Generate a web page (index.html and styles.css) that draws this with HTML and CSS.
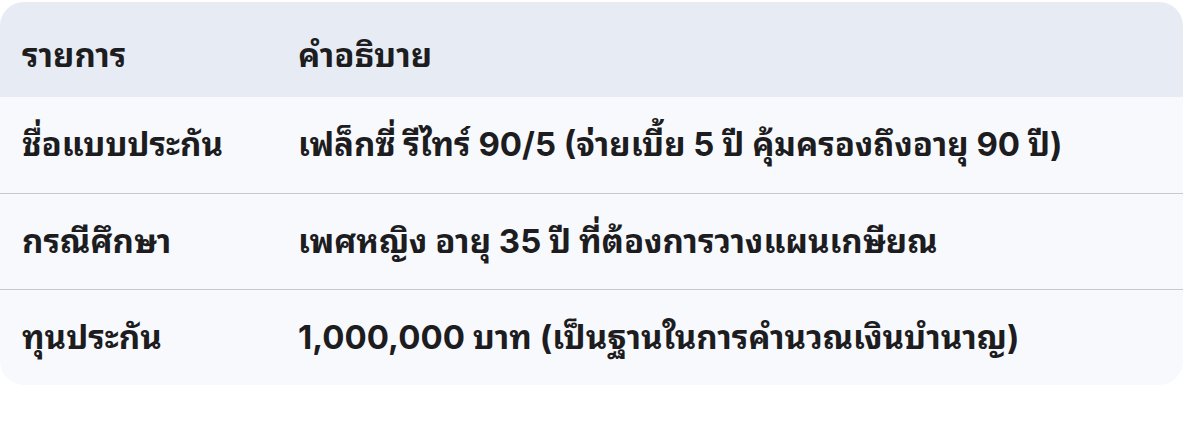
FILE: index.html
```html
<!DOCTYPE html>
<html lang="th">
<head>
<meta charset="utf-8">
<link rel="stylesheet" href="styles.css">
</head>
<body>
<div class="wrap">
  <table class="info">
    <colgroup><col class="col-key"><col></colgroup>
    <thead>
      <tr><th>รายการ</th><th>คำอธิบาย</th></tr>
    </thead>
    <tbody>
      <tr><td>ชื่อแบบประกัน</td><td>เฟล็กซี่ รีไทร์ 90/5 (จ่ายเบี้ย 5 ปี คุ้มครองถึงอายุ 90 ปี)</td></tr>
      <tr><td>กรณีศึกษา</td><td>เพศหญิง อายุ 35 ปี ที่ต้องการวางแผนเกษียณ</td></tr>
      <tr><td>ทุนประกัน</td><td>1,000,000 บาท (เป็นฐานในการคำนวณเงินบำนาญ)</td></tr>
    </tbody>
  </table>
</div>
</body>
</html>
```
FILE: styles.css
```css
html, body { margin: 0; padding: 0; background: #ffffff; }
.wrap { padding-top: 2px; }
.info {
  width: 1183px;
  table-layout: fixed;
  border-collapse: separate;
  border-spacing: 0;
  border-radius: 24px;
  overflow: hidden;
  font-family: Inter, "Noto Sans Thai Looped", "Noto Sans Thai", "Noto Sans", sans-serif;
  font-weight: 700;
  font-size: 33px;
  color: #1d1d1f;
  background: #f7f9fd;
}
.col-key { width: 276px; }
.info th, .info td {
  text-align: left;
  padding: 0 22px;
  vertical-align: middle;
  line-height: 1.2;
  white-space: nowrap;
}
.info th { background: #e7ecf4; height: 95px; padding-top: 12px; box-sizing: border-box; }
.info td { height: 96px; box-sizing: border-box; }
.info tbody tr + tr td { border-top: 1px solid #c9c9cd; }
```
